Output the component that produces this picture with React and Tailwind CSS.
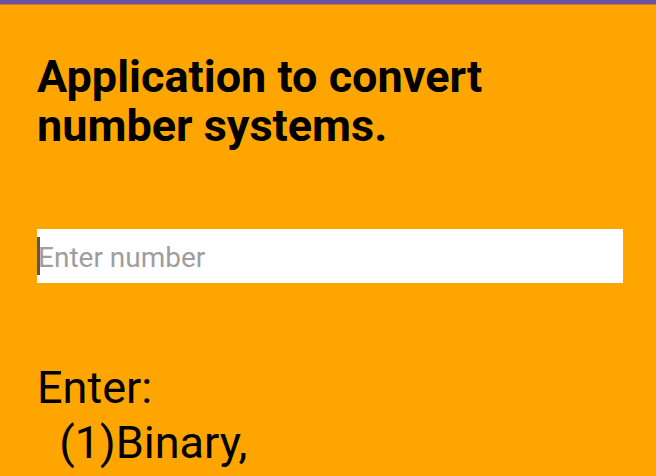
export default function App() {
  return (
    <div className="w-[656px] h-[476px] overflow-hidden bg-[#ffa500] flex flex-col" style={{ fontFamily: "Roboto, 'Noto Sans', sans-serif" }}>
      <div className="h-[4px] bg-[#6a52a2] shrink-0" />
      <div className="h-[1px] bg-[#c07a4a] shrink-0" />
      <div className="px-[37px] flex flex-col">
        <h1 className="mt-[47px] text-[45px] leading-[49px] font-bold text-black whitespace-nowrap">
          Application to convert
          <br />
          number systems.
        </h1>
        <div className="mt-[79px] w-[586px] h-[54px] bg-white flex items-center">
          <div className="w-[3px] h-[38px] bg-[#555555] shrink-0" />
          <input
            className="flex-1 -ml-[2px] pt-[3px] bg-transparent outline-none text-[28px] text-[#9e9e9e] placeholder:text-[#9e9e9e] px-0 pb-0"
            placeholder="Enter number"
          />
        </div>
        <div className="mt-[77px] text-[45px] leading-[55px] text-black whitespace-pre">
          {"Enter:\n  (1)Binary,"}
        </div>
      </div>
    </div>
  );
}
